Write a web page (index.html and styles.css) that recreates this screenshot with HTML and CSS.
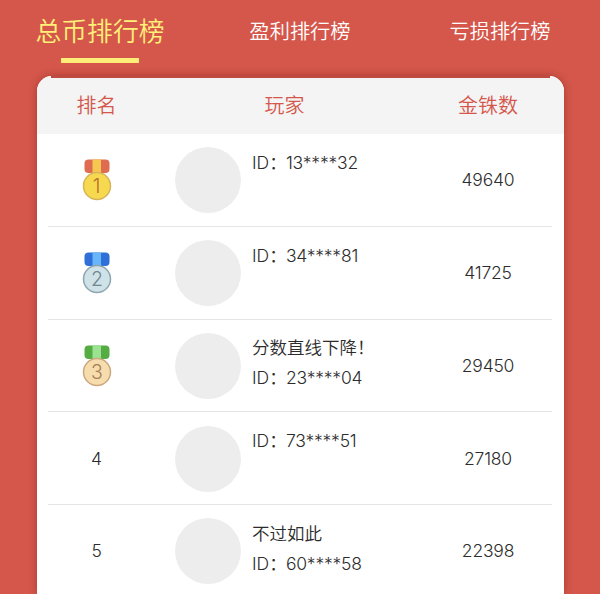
FILE: index.html
```html
<!DOCTYPE html>
<html lang="zh-CN">
<head>
<meta charset="utf-8">
<title>排行榜</title>
<link rel="stylesheet" href="styles.css">
</head>
<body>
<nav class="tabs">
  <a class="tab active">总币排行榜</a>
  <a class="tab">盈利排行榜</a>
  <a class="tab">亏损排行榜</a>
</nav>
<main class="card">
  <header class="grid head"><span>排名</span><span>玩家</span><span>金铢数</span></header>
  <div class="grid row">
    <div class="rank"><svg class="medal gold" viewBox="0 0 30 42"><rect class="ribbon" x="2.5" y="0.5" width="25" height="13.5" rx="4"/><rect class="stripe" x="10.5" y="0.5" width="8.5" height="13.5"/><circle class="coin" cx="15" cy="27" r="13.5"/><text x="14.5" y="34.2">1</text></svg></div>
    <div class="player"><i class="avatar"></i><div class="info"><div>ID：<span class="num">13****32</span></div></div></div>
    <div class="amount">49640</div>
  </div>
  <div class="grid row">
    <div class="rank"><svg class="medal silver" viewBox="0 0 30 42"><rect class="ribbon" x="2.5" y="0.5" width="25" height="13.5" rx="4"/><rect class="stripe" x="10.5" y="0.5" width="8.5" height="13.5"/><circle class="coin" cx="15" cy="27" r="13.5"/><text x="15" y="34.2">2</text></svg></div>
    <div class="player"><i class="avatar"></i><div class="info"><div>ID：<span class="num">34****81</span></div></div></div>
    <div class="amount">41725</div>
  </div>
  <div class="grid row">
    <div class="rank"><svg class="medal bronze" viewBox="0 0 30 42"><rect class="ribbon" x="2.5" y="0.5" width="25" height="13.5" rx="4"/><rect class="stripe" x="10.5" y="0.5" width="8.5" height="13.5"/><circle class="coin" cx="15" cy="27" r="13.5"/><text x="15" y="34.2">3</text></svg></div>
    <div class="player"><i class="avatar"></i><div class="info"><div>分数直线下降！</div><div>ID：<span class="num">23****04</span></div></div></div>
    <div class="amount">29450</div>
  </div>
  <div class="grid row">
    <div class="rank">4</div>
    <div class="player"><i class="avatar"></i><div class="info"><div>ID：<span class="num">73****51</span></div></div></div>
    <div class="amount">27180</div>
  </div>
  <div class="grid row last">
    <div class="rank">5</div>
    <div class="player"><i class="avatar"></i><div class="info"><div>不过如此</div><div>ID：<span class="num">60****58</span></div></div></div>
    <div class="amount">22398</div>
  </div>
</main>
</body>
</html>
```
FILE: styles.css
```css
* { box-sizing: border-box; }
html, body { height: 100%; }
body {
  margin: 0;
  overflow: hidden;
  background: #d5574b;
  color: #2c2c2c;
  font: 350 17.5px/30px Inter, "Noto Sans CJK SC", sans-serif;
}
.tabs {
  display: grid;
  grid-template-columns: 200px 200px 200px;
  height: 76px;
  text-align: center;
  color: #fff;
}
.tab { font-size: 20.2px; line-height: 64px; }
.active {
  position: relative;
  font-size: 25.8px;
  color: #fef078;
}
.active::after {
  content: "";
  position: absolute;
  left: 61px;
  top: 58px;
  width: 78px;
  height: 4.5px;
  background: #feee78;
}
.card {
  position: relative;
  width: 527.5px;
  height: 518px;
  margin-left: 36.5px;
  border-radius: 15px 15px 0 0;
  background: #fff;
  box-shadow: 0 0 9px rgba(110, 20, 15, .45);
}
.card::before {
  content: "";
  position: absolute;
  left: 14.5px;
  right: 14px;
  top: 0;
  height: 1.5px;
  background: #bd4b40;
}
.grid {
  display: grid;
  grid-template-columns: 120px 256px 151px;
  align-items: center;
  text-align: center;
}
.head {
  height: 58px;
  padding-top: 2px;
  border-radius: 15px 15px 0 0;
  background: #f4f4f4;
  color: #d5574b;
  font-size: 20px;
}
.row { position: relative; height: 92.75px; }
.row.last { height: 89px; align-items: start; }
.row.last .rank, .row.last .amount { line-height: 92.5px; }
.row.last .player { padding-top: 13.25px; }
.row:not(.last)::after {
  content: "";
  position: absolute;
  left: 11.5px;
  right: 12px;
  bottom: 0;
  height: 1px;
  background: #e4e4e4;
}
.rank, .amount { letter-spacing: -.2px; }
.player {
  display: flex;
  gap: 11px;
  padding-left: 18.5px;
  text-align: left;
}
.avatar {
  width: 66px;
  height: 66px;
  border-radius: 50%;
  background: #ededed;
}
.info { height: 66px; padding-top: .5px; white-space: nowrap; }
.num { margin-left: -.8px; letter-spacing: -.2px; }
.medal {
  display: block;
  width: 30px;
  height: 42px;
  margin: 0 auto;
}
.medal text {
  font: 350 19.5px Inter, sans-serif;
  letter-spacing: 0;
  text-anchor: middle;
}
.coin { stroke-width: 1.5; }
.gold .ribbon { fill: #df6b50; }
.gold .stripe { fill: #f6c750; }
.gold .coin { fill: #f7d950; stroke: #d7b45a; }
.gold text { fill: #b56c2c; }
.silver .ribbon { fill: #2f70d8; }
.silver .stripe { fill: #68b5fa; }
.silver .coin { fill: #cee2e7; stroke: #8ea6af; }
.silver text { fill: #71868e; }
.bronze .ribbon { fill: #55ac43; }
.bronze .stripe { fill: #9be293; }
.bronze .coin { fill: #f7ddae; stroke: #cda77e; }
.bronze text { fill: #a57e54; }
```
